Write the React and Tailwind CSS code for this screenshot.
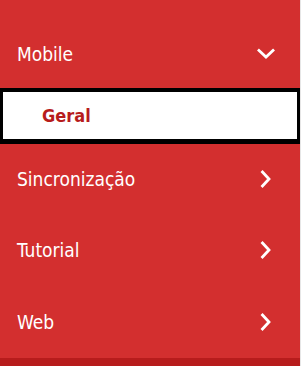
import React from "react";

const font = { fontFamily: '"DejaVu Sans Condensed", "DejaVu Sans", Verdana, sans-serif', fontStretch: "condensed" };

function ChevronRight() {
  return (
    <svg width="20" height="18" viewBox="0 0 20 18" className="block">
      <polyline points="6.5,2 13,9 6.5,16" fill="none" stroke="white" strokeWidth="2.8" strokeLinecap="square" strokeLinejoin="miter" />
    </svg>
  );
}

function ChevronDown() {
  return (
    <svg width="20" height="12" viewBox="0 0 20 12" className="block">
      <polyline points="3,2.5 10,9 17,2.5" fill="none" stroke="white" strokeWidth="2.8" strokeLinecap="square" strokeLinejoin="miter" />
    </svg>
  );
}

function Row({ label, h, children }) {
  return (
    <div className={`flex items-center justify-between pl-[17px] pr-[24px] ${h}`}>
      <span className="text-[19px] text-white leading-none">{label}</span>
      {children}
    </div>
  );
}

export default function App() {
  return (
    <div className="w-[301px] h-[366px] bg-[#d32f2f] border-r border-[#e6e6e6] flex flex-col overflow-hidden" style={font}>
      <div className="h-[20px]" />
      <Row label="Mobile" h="h-[68px]">
        <ChevronDown />
      </Row>
      <div className="h-[56px] bg-white border-black border-t-4 border-b-[5px] border-l-[3px] border-r-[3px] flex items-center pl-[39px]">
        <span className="text-[18px] font-bold text-[#b71c1c] leading-none">Geral</span>
      </div>
      <Row label="Sincronização" h="h-[70px]">
        <ChevronRight />
      </Row>
      <Row label="Tutorial" h="h-[72px]">
        <ChevronRight />
      </Row>
      <Row label="Web" h="h-[72px]">
        <ChevronRight />
      </Row>
      <div className="h-[8px] bg-[#b71c1c]" />
    </div>
  );
}
